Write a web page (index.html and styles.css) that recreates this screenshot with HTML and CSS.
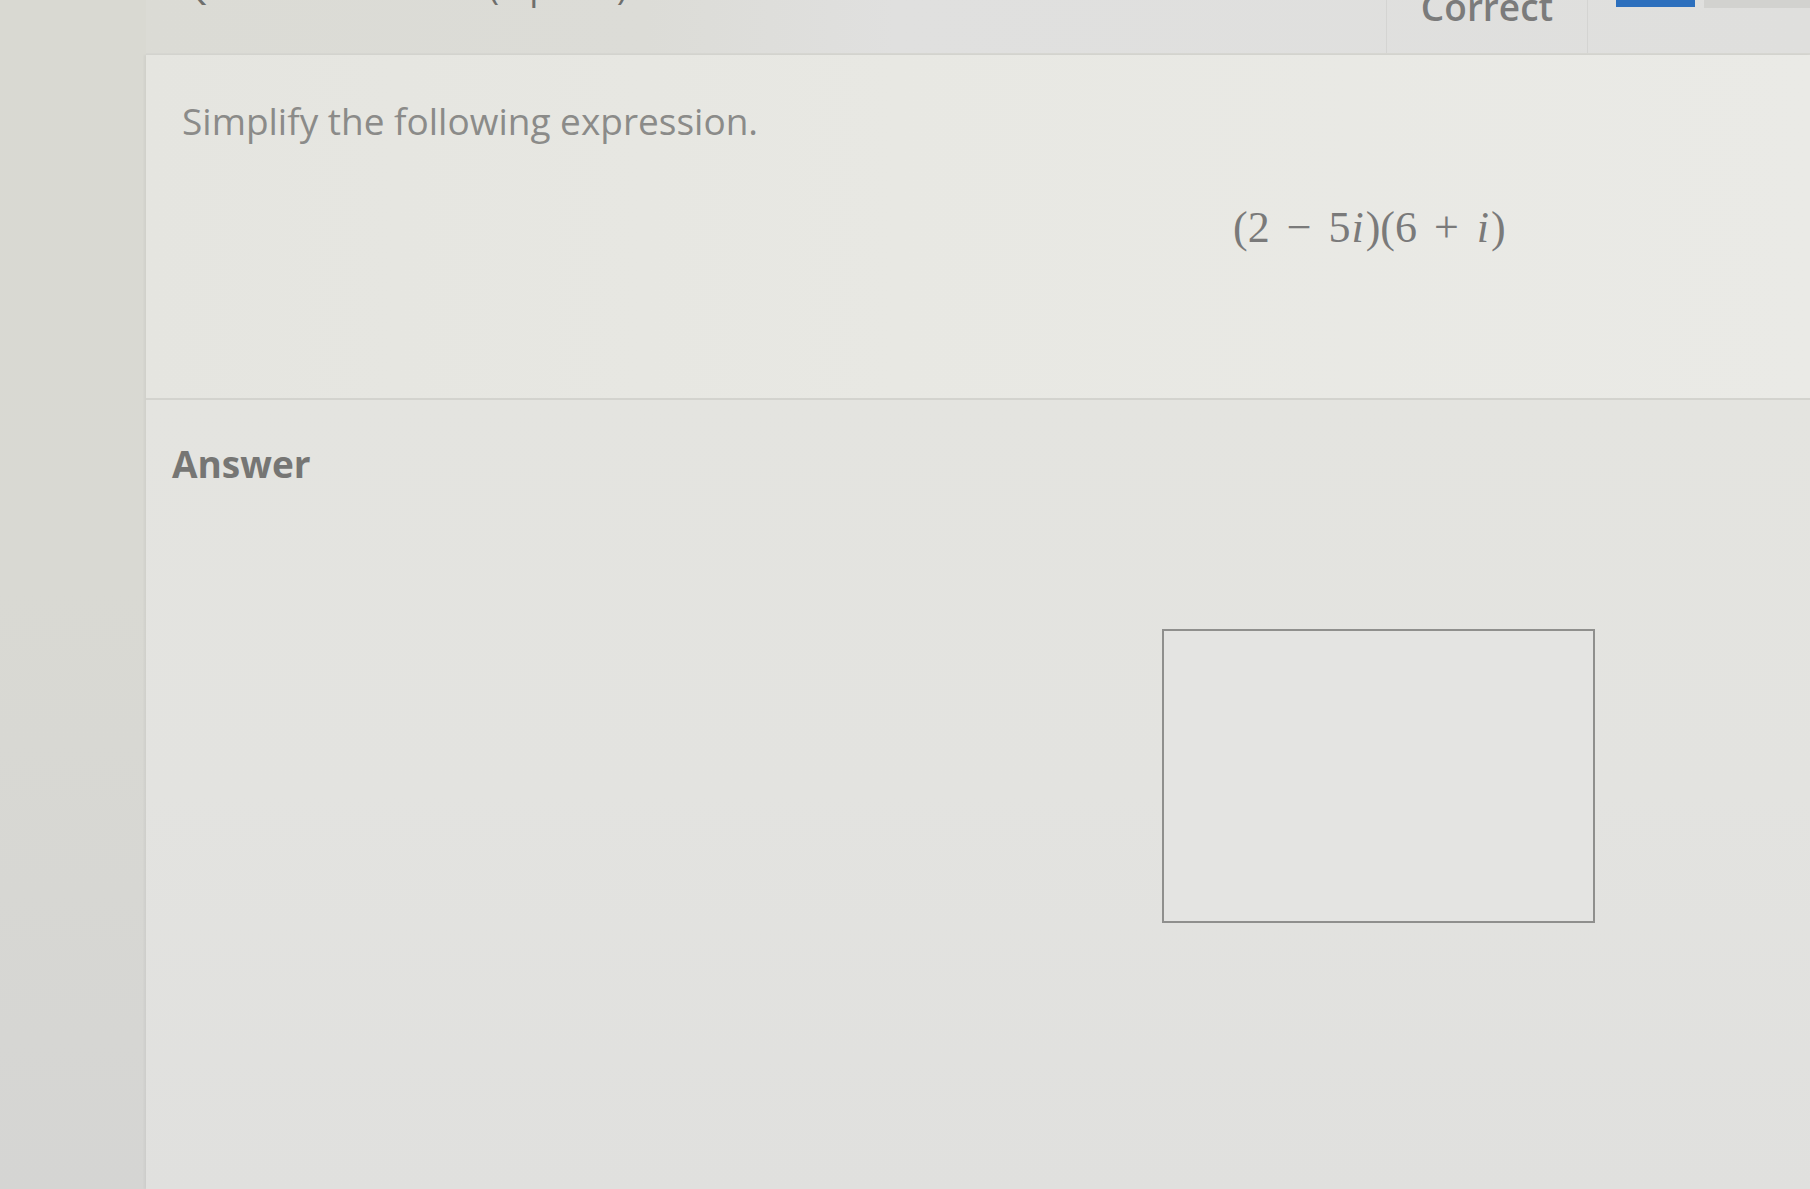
FILE: index.html
```html
<!DOCTYPE html>
<html lang="en">
<head>
<meta charset="utf-8">
<title>Simplify the following expression</title>
<link rel="stylesheet" href="styles.css">
</head>
<body>
<div class="page">
  <aside class="side"></aside>
  <main class="main">
    <header class="topbar">
      <div class="crumb">Question 12 of 22 (1 point)</div>
      <div class="status"><span class="status-text">Correct</span></div>
      <div class="tools">
        <span class="bluebar"></span>
        <span class="tab"></span>
      </div>
    </header>
    <section class="card">
      <div class="question">
        <p class="prompt">Simplify the following expression.</p>
        <div class="expr">(2<span class="op">&minus;</span>5<i>i</i>)(6<span class="op">+</span><i>i</i>)</div>
      </div>
      <div class="answer">
        <h2 class="answer-title">Answer</h2>
        <div class="answer-box"></div>
      </div>
    </section>
  </main>
</div>
</body>
</html>
```

FILE: styles.css
```css
html, body {
  margin: 0;
  padding: 0;
  height: 100%;
}
body {
  background: #d7d7d2;
  font-family: "Open Sans", "Liberation Sans", sans-serif;
  overflow: hidden;
}
.page {
  display: grid;
  grid-template-columns: 146px 1fr;
  height: 1189px;
}
.side {
  background: linear-gradient(180deg, #d9d9d2 0%, #d9d9d3 50%, #d5d5d3 100%);
}
.main {
  display: flex;
  flex-direction: column;
  min-width: 0;
}
.topbar {
  height: 55px;
  display: flex;
  background: linear-gradient(90deg, #dbdbd5 0%, #dcdcd7 30%, #e0e0df 45%, #dfdfdd 100%);
  border-bottom: 2px solid #d6d6d1;
  box-sizing: border-box;
  overflow: hidden;
}
.crumb {
  flex: 1;
  min-width: 0;
  padding-left: 36px;
  font-size: 36px;
  line-height: 36px;
  margin-top: -32px;
  color: #6f6f6d;
  white-space: nowrap;
}
.status {
  width: 200px;
  flex: none;
  border-left: 1px solid #d4d4d2;
  border-right: 1px solid #d4d4d2;
  display: flex;
  justify-content: center;
}
.status-text {
  font-size: 37px;
  line-height: 36px;
  font-weight: 600;
  margin-top: -11px;
  color: #7b7b7b;
}
.tools {
  width: 222px;
  flex: none;
  box-sizing: border-box;
  display: flex;
  align-items: flex-start;
  padding-left: 28px;
  gap: 9px;
}
.bluebar {
  width: 79px;
  height: 7px;
  background: #2c6fbd;
}
.tab {
  flex: 1;
  height: 8px;
  background: #d2d2cf;
}
.card {
  flex: 1;
  display: flex;
  flex-direction: column;
  background: linear-gradient(90deg, #e3e3dd 0%, #e6e6e1 40%, #e9e9e5 100%);
  box-shadow: -2px 0 2px rgba(0, 0, 0, 0.04);
}
.question {
  padding: 41px 0 145px 36px;
  border-bottom: 2px solid #d3d3ce;
  background: linear-gradient(90deg, #e5e5e0 0%, #e8e8e3 45%, #eaeae6 100%);
}
.prompt {
  margin: 0;
  font-size: 37px;
  line-height: 50px;
  color: #8b8b89;
}
.expr {
  margin: 57px 0 0 1051px;
  font-family: "Liberation Serif", "DejaVu Serif", serif;
  font-size: 44px;
  line-height: 50px;
  color: #7a7a7a;
  white-space: nowrap;
}
.expr i {
  padding: 0 2px 0 1px;
}
.op {
  margin: 0 17px;
}
.answer {
  flex: 1;
  padding: 40px 0 0 26px;
  background: linear-gradient(180deg, #e4e4e0 0%, #e3e3e0 50%, #e0e0de 100%);
}
.answer-title {
  margin: 0;
  font-size: 37px;
  line-height: 48px;
  font-weight: 700;
  color: #767674;
}
.answer-box {
  margin: 141px 0 0 990px;
  width: 433px;
  height: 294px;
  box-sizing: border-box;
  border: 2px solid #8f8f8d;
  background: #e4e4e2;
}
```
